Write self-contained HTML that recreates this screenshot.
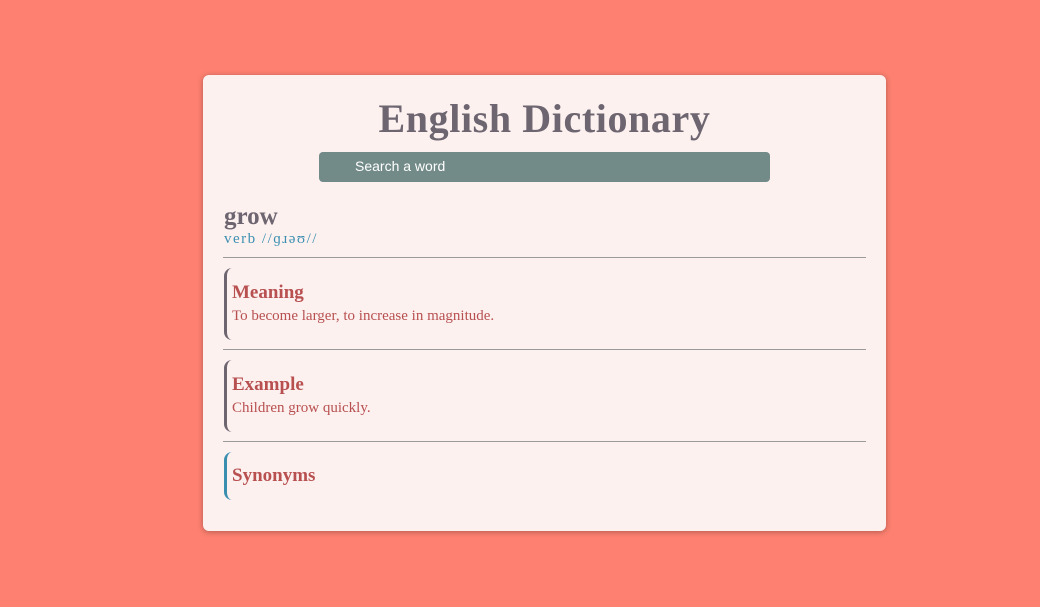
<!DOCTYPE html>
<html><head><style>
body{margin:0;width:1040px;height:607px;background:#fd8070;font-family:"Liberation Serif",serif;overflow:hidden}
.card{position:absolute;left:203px;top:75px;width:683px;height:456px;background:#fdf1f0;border-radius:6px;box-shadow:0 1px 6px rgba(0,0,0,.3)}
h1{position:absolute;left:203px;width:683px;top:96px;margin:0;text-align:center;font-size:40px;font-weight:700;color:#6d6670;letter-spacing:0.6px;line-height:46px}
.search{position:absolute;left:319px;top:152px;width:451px;height:30px;background:#728a88;border-radius:4px;color:#fff;font:14px "Liberation Sans",sans-serif;line-height:29px;box-sizing:border-box;padding-left:36px}
.abs{position:absolute}
.word{left:224px;top:203px;font-size:25px;font-weight:700;color:#6d6670}
.pos{left:224px;top:231px;font-size:15px;color:#3a8fb0;letter-spacing:1.5px}
.hr{position:absolute;left:223px;width:643px;height:1px;background:#9a9a9a}
.sec{position:absolute;left:224px;width:600px;border-left:3px solid #6d6670;border-radius:8px 0 0 8px;padding-left:5px;box-sizing:border-box}
.sec h2{margin:0;font-size:19px;color:#b85050;font-weight:700}
.sec p{margin:4px 0 0;font-size:15px;color:#b85050}
</style></head><body>
<div class="card"></div>
<h1>English Dictionary</h1>
<div class="search">Search a word</div>
<div class="abs word">grow</div>
<div class="abs pos">verb //ɡɹəʊ//</div>
<div class="hr" style="top:257px"></div>
<div class="sec" style="top:268px;height:72px;padding-top:14px"><h2>Meaning</h2><p>To become larger, to increase in magnitude.</p></div>
<div class="hr" style="top:349px"></div>
<div class="sec" style="top:360px;height:72px;padding-top:14px"><h2>Example</h2><p>Children grow quickly.</p></div>
<div class="hr" style="top:441px"></div>
<div class="sec" style="top:452px;height:48px;padding-top:13px;border-left-color:#3a8fb0"><h2>Synonyms</h2></div>
</body></html>
